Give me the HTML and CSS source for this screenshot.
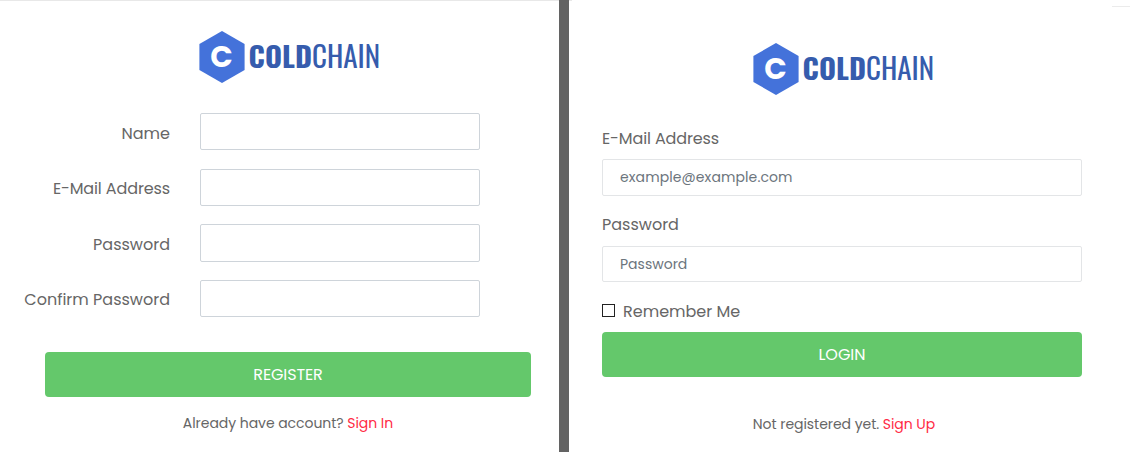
FILE: index.html
```
<!DOCTYPE html>
<html lang="en">
<head>
<meta charset="utf-8">
<title>ColdChain</title>
<link rel="stylesheet" href="styles.css">
</head>
<body>
<main class="page">
  <section class="panel register">
    <svg class="logo" width="200" height="54" viewBox="0 0 200 54" role="img" aria-label="ColdChain">
      <path d="M24 1 46.6 14v26L24 53 1.4 40V14Z" fill="#4472da"/>
      <text class="initial" x="12.2" y="37">C</text>
      <text class="brand" x="50.6" y="38" textLength="131.6" lengthAdjust="spacingAndGlyphs"><tspan class="bold">COLD</tspan>CHAIN</text>
    </svg>
    <form class="rows">
      <label class="row"><span class="label lower">Name</span><input class="field" type="text"></label>
      <label class="row"><span class="label w-email">E-Mail Address</span><input class="field" type="email"></label>
      <label class="row"><span class="label lower">Password</span><input class="field tall" type="password"></label>
      <label class="row"><span class="label">Confirm Password</span><input class="field" type="password"></label>
    </form>
    <button class="button w-register">REGISTER</button>
    <p class="hint">Already have account? <a class="link">Sign In</a></p>
  </section>
  <div class="divider"></div>
  <section class="panel login">
    <div class="edge"><i class="edge-left"></i><i class="edge-right"></i></div>
    <svg class="logo" width="200" height="54" viewBox="0 0 200 54" role="img" aria-label="ColdChain">
      <path d="M24 1 46.6 14v26L24 53 1.4 40V14Z" fill="#4472da"/>
      <text class="initial" x="12.2" y="37">C</text>
      <text class="brand" x="50.6" y="38" textLength="131.6" lengthAdjust="spacingAndGlyphs"><tspan class="bold">COLD</tspan>CHAIN</text>
    </svg>
    <form class="stack">
      <label class="label w-email" for="email">E-Mail Address</label>
      <input class="field first w-example" id="email" type="email" placeholder="example@example.com">
      <label class="label second" for="password">Password</label>
      <input class="field short" id="password" type="password" placeholder="Password">
      <label class="remember"><input class="check" type="checkbox"><span class="label">Remember Me</span></label>
      <button class="button" type="button">LOGIN</button>
    </form>
    <p class="hint">Not registered yet. <a class="link">Sign Up</a></p>
  </section>
</main>
</body>
</html>
```
FILE: styles.css
```
* { box-sizing: border-box; }
body {
  margin: 0;
  background: #fff;
  color: #666;
  font-family: Poppins, Inter, sans-serif;
  font-size: 16px;
  line-height: 24px;
}
.page { display: flex; width: 1138px; height: 452px; overflow: hidden; }
.panel { display: flex; flex-direction: column; }
.register { width: 559px; border-top: 1px solid #e8e8e8; padding-top: 29px; }
.login { width: 569px; }
.divider { width: 10px; background: #636363; }
.edge { display: flex; justify-content: space-between; height: 42px; padding-right: 8px; }
.edge-left { width: 3px; height: 1px; background: #e8e8e8; }
.edge-right { width: 18px; height: 1px; margin-top: 6px; background: #ebebeb; }
.logo { display: block; flex: none; margin-left: 198px; overflow: visible; }
.login .logo { margin-left: 183px; }
.initial { font-family: Poppins, Inter, sans-serif; font-size: 29.5px; font-weight: 700; fill: #fff; }
.brand { font-family: Oswald, Roboto, sans-serif; font-size: 28.5px; font-weight: 400; fill: #365cad; }
.bold { font-weight: 700; }
.rows { display: grid; grid-auto-rows: 37px; row-gap: 18.6px; margin-top: 29px; }
.row { display: grid; grid-template-columns: 170px 280px; column-gap: 30px; }
.row .label { padding-top: 8px; text-align: right; }
.row .lower { padding-top: 9px; }
.label { white-space: nowrap; }
.field {
  display: block;
  width: 100%;
  height: 37px;
  margin: 0;
  padding: 0 17px;
  border: 1px solid #ced4da;
  border-radius: 2px;
  background: #fff;
  color: #6c757d;
  font: 14px Poppins, Inter, sans-serif;
}
.tall { height: 38px; }
.field::placeholder { color: #6c757d; opacity: 1; }
.button {
  display: block;
  height: 45px;
  padding: 0;
  border: 0;
  border-radius: 4px;
  background: #64c86b;
  color: #fff;
  font: 16px Poppins, Inter, sans-serif;
}
.register .button { width: 486px; margin: 35px 0 0 45px; }
.hint { margin: 0; font-size: 14px; line-height: 22px; letter-spacing: -.05px; text-align: center; white-space: nowrap; }
.register .hint { width: 486px; margin: 15px 0 0 45px; }
.link { color: #ff2b45; }
.stack { display: flex; flex-direction: column; width: 480px; margin: 31px 0 0 33px; }
.stack .label { line-height: 24px; }
.stack .field { border-color: #e3e5e7; }
.stack .first { margin-top: 8px; }
.stack .second { margin-top: 17px; }
.stack .short { height: 36px; margin-top: 9px; }
.remember { display: flex; align-items: center; gap: 8px; height: 24px; margin-top: 17px; }
.remember .label { padding-top: 2px; }
.check { appearance: none; width: 13px; height: 13px; margin: 0 0 1px; border: 1px solid #222; background: #fff; }
.stack .button { margin-top: 9px; }
.login .hint { width: 484px; margin: 36px 0 0 33px; }
.w-email { letter-spacing: -.12px; }
.w-example { letter-spacing: .1px; }
.w-register { letter-spacing: -.12px; }
```
